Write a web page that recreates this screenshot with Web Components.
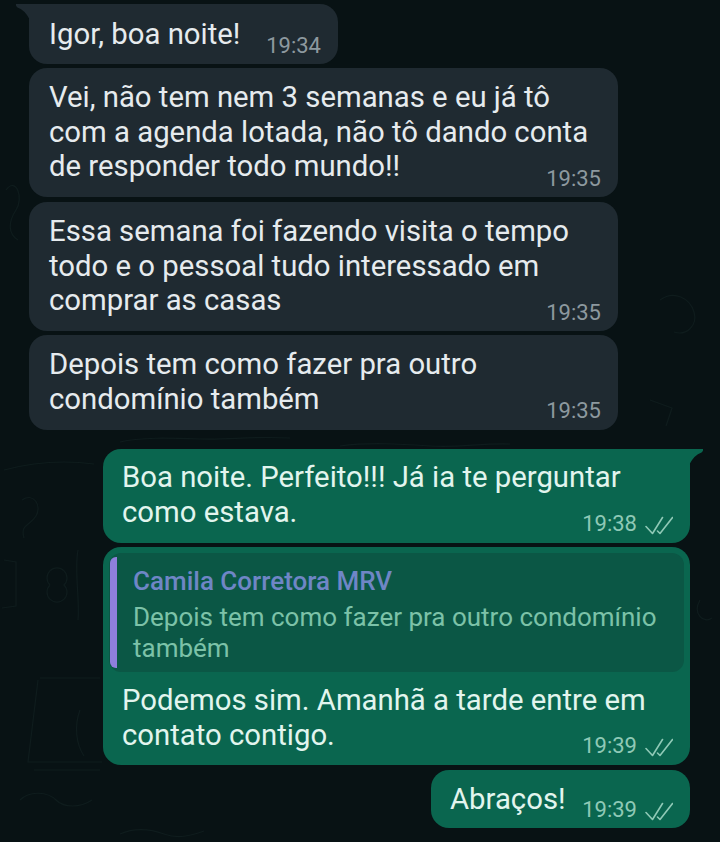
<!DOCTYPE html>
<html lang="pt">
<head>
<meta charset="utf-8">
<title>Conversa</title>
<style>
  html, body { margin: 0; padding: 0; height: 100%; }
  body { background: #081214; font-family: Roboto, "Liberation Sans", sans-serif; overflow: hidden; }
</style>
</head>
<body>

<chat-thread>
  <chat-bubble side="in" first time="19:34" style="--w:309px;--h:60px;--pt:7px;--tm:-20px">Igor, boa noite!</chat-bubble>
  <chat-bubble side="in" time="19:35" style="--w:589px;--h:129px;--pt:6px">Vei, não tem nem 3 semanas e eu já tô<br>com a agenda lotada, não tô dando conta<br>de responder todo mundo!!</chat-bubble>
  <chat-bubble side="in" time="19:35" style="--w:589px;--h:129px;--mt:1px;--pt:6px">Essa semana foi fazendo visita o tempo<br>todo e o pessoal tudo interessado em<br>comprar as casas</chat-bubble>
  <chat-bubble side="in" time="19:35" style="--w:589px;--h:95px;--pt:6px">Depois tem como fazer pra outro<br>condomínio também</chat-bubble>

  <chat-bubble side="out" first ticks time="19:38" style="--w:587px;--h:94px;--mt:15px;--pt:5px">Boa noite. Perfeito!!! Já ia te perguntar<br>como estava.</chat-bubble>
  <chat-bubble side="out" ticks time="19:39" style="--w:587px;--h:218px;--pt:11px;--tm:-20px">
    <quoted-message slot="quote" author="Camila Corretora MRV">Depois tem como fazer pra outro condomínio<br>também</quoted-message>
    Podemos sim. Amanhã a tarde entre em<br>contato contigo.
  </chat-bubble>
  <chat-bubble side="out" ticks time="19:39" style="--w:259px;--h:58px;--mt:1px;--pt:6px;--tm:-21px">Abraços!</chat-bubble>
</chat-thread>

<script>
// read receipts, same two strokes for every outgoing message
const TICKS = `<svg width="28" height="19" viewBox="0 0 28 19" fill="none" stroke="currentColor" stroke-width="1.6" stroke-linecap="round" stroke-linejoin="round">
  <path d="M1 10.5 L7.5 17.5 L17.5 1.5"/><path d="M12.5 15 L15 17.5 L27.5 1.5"/></svg>`;

class ChatThread extends HTMLElement {
  constructor() {
    super();
    this.shadow = this.attachShadow({mode: "open"});
    this.shadow.innerHTML = `<style>
      :host {
        display: flex;
        flex-direction: column;
        gap: 4px;
        box-sizing: border-box;
        width: 720px;
        height: 842px;
        padding: 4px 30px 0 29px;
        background: #081214;
        position: relative;
      }
      svg.doodles { position: absolute; inset: 0; }
    </style>
    <svg class="doodles" width="720" height="842" fill="none" stroke="#0f1c1d" stroke-width="1.2">
      <path d="M6 190c10-14 18 8 10 20s-8 24 2 30"/>
      <path d="M4 470c30-8 60-10 90-6"/>
      <path d="M22 500c12-8 20 6 14 16s-16 8-12 22"/>
      <path d="M4 560l12 2v44l-14 2"/>
      <path d="M78 550c-4 20 2 50 0 70"/>
      <path d="M50 585a10 10 0 1 0 14 0a10 10 0 1 0 -14 0"/>
      <path d="M40 678h60M38 680l-10 82h74M34 770h66"/>
      <path d="M80 710c-6 16-4 34 4 46"/>
      <path d="M20 800c10-10 28-8 36 0s24 8 36 0"/>
      <path d="M660 300c14-10 30-2 34 12s-8 24-20 20"/>
      <path d="M650 400l22 8-6 18"/>
      <path d="M700 600c-8 14 4 24 12 18"/>
      <path d="M120 834c14-6 30-5 44 0s26 2 40-3"/>
      <path d="M120 442c20-5 50-4 80-3s50-3 90-1"/>
      <path d="M340 446c30-4 60-2 90 0s50-3 80-2"/>
    </svg>
    <slot></slot>`;
  }
}

class ChatBubble extends HTMLElement {
  constructor() {
    super();
    this.shadow = this.attachShadow({mode: "open"});
    this.shadow.innerHTML = `<style>
      :host {
        display: block;
        position: relative;
        box-sizing: border-box;
        width: var(--w);
        height: var(--h);
        margin-top: var(--mt, 0);
        border-radius: 18px;
        background: #1f2a31;
        color: #e6ebee;
        font-size: 29.3px;
        line-height: 34.5px;
      }
      :host([side="out"]) {
        align-self: flex-end;
        background: #0a664f;
        color: #e2f5ee;
      }
      :host([first][side="in"]) { border-top-left-radius: 0; }
      :host([first][side="out"]) { border-top-right-radius: 0; }
      .tail { display: none; position: absolute; top: 0; width: 14px; height: 16px; }
      :host([first]) .tail { display: block; }
      :host([side="in"]) .tail { left: -13px; fill: #1f2a31; }
      :host([side="out"]) .tail { right: -13px; fill: #0a664f; transform: scaleX(-1); }
      .inner { display: flex; flex-direction: column; padding: 6px 6px 0 6px; height: 100%; box-sizing: border-box; }
      .text { padding: var(--pt, 8px) 14px 0 14px; }
      :host([side="out"]) .text { padding-left: 13px; }
      .meta {
        display: flex;
        justify-content: flex-end;
        align-items: center;
        gap: 8px;
        margin-top: var(--tm, -19px);
        padding-right: 11px;
        font-size: 22px;
        line-height: 28px;
        color: #8d999f;
      }
      :host([side="out"]) .meta { color: #8fc9b6; }
      .ticks { display: none; width: 28px; height: 19px; margin-top: -1px; }
      :host([ticks]) .ticks { display: block; }
    </style>
    <svg class="tail" viewBox="0 0 14 16"><path d="M0 0H14V16Q9 6 1.5 3.5 -0.5 2 0 0Z"/></svg>
    <div class="inner">
      <slot name="quote"></slot>
      <div class="text"><slot></slot></div>
      <div class="meta"><span class="time"></span><span class="ticks">${TICKS}</span></div>
    </div>`;
    this.shadow.querySelector(".time").textContent = this.getAttribute("time");
  }
}

class QuotedMessage extends HTMLElement {
  constructor() {
    super();
    this.shadow = this.attachShadow({mode: "open"});
    this.shadow.innerHTML = `<style>
      :host {
        display: flex;
        box-sizing: border-box;
        height: 119px;
        border-radius: 12px;
        background: #0b5745;
        font-size: 26px;
        line-height: 31px;
      }
      .bar {
        flex: none;
        width: 7px;
        margin: 4px 0 4px 1px;
        border-radius: 6px 0 0 6px;
        background: #8f7fdc;
      }
      .content { padding: 7px 0 0 16px; }
      .author { color: #6f86c6; line-height: 42px; font-weight: 500; }
      .body { color: #7cc2a8; }
    </style>
    <div class="bar"></div>
    <div class="content">
      <div class="author"></div>
      <div class="body"><slot></slot></div>
    </div>`;
    this.shadow.querySelector(".author").textContent = this.getAttribute("author");
  }
}

customElements.define("chat-thread", ChatThread);
customElements.define("chat-bubble", ChatBubble);
customElements.define("quoted-message", QuotedMessage);
</script>
</body>
</html>
